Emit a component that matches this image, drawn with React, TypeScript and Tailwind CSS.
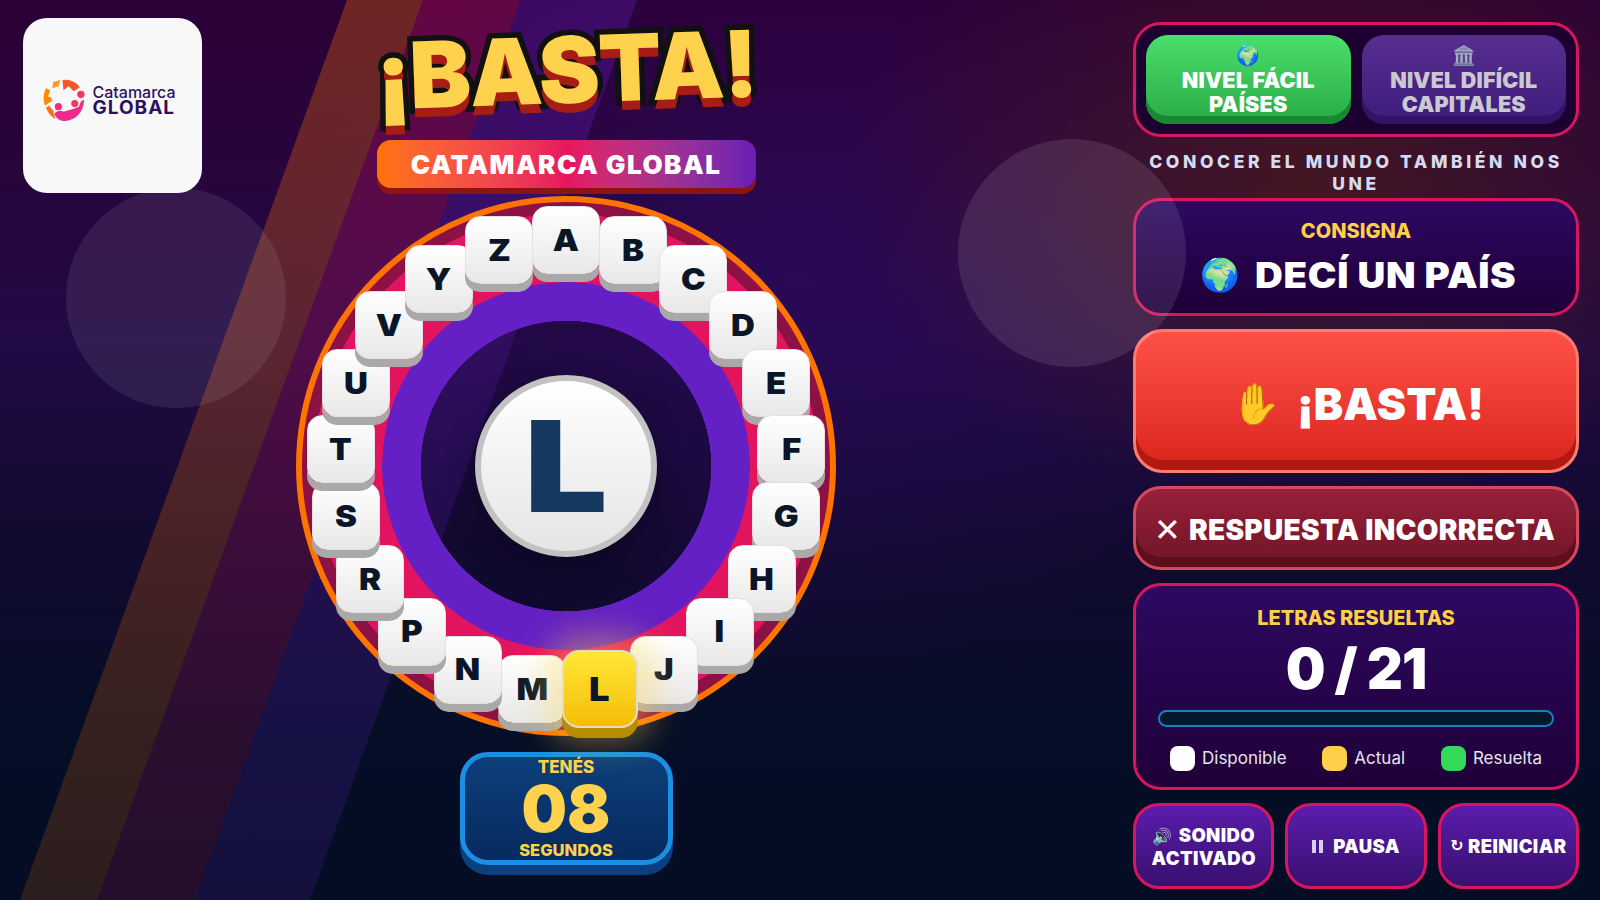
const LETTERS = ["A", "B", "C", "D", "E", "F", "G", "H", "I", "J", "L", "M", "N", "P", "R", "S", "T", "U", "V", "Y", "Z"];

function Logo() {
  return (
    <svg width="43" height="43" viewBox="0 0 42 42" className="shrink-0">
      <path d="M10 3 L17 1 L15 7 L9 9 Z" fill="#ff9a1a" />
      <path d="M3 9 C0 15 0 21 2 26 L8 22 C10 20 8 17 5 17 L7 11 Z" fill="#ff8a00" />
      <path d="M3 28 C5 33 8 37 12 39 L10 31 L6 26 Z" fill="#f97316" />
      <path d="M19 1 C26 0 32 3 36 8 L30 12 L25 7 L20 11 Z" fill="#f8552a" />
      <circle cx="37" cy="15" r="3.6" fill="#f5365c" />
      <circle cx="15" cy="27" r="3.5" fill="#f02a8a" />
      <circle cx="31" cy="24" r="3.5" fill="#f5365c" />
      <path d="M11 34 C14 31 17 30 20 32 L30 29 L35 27 L37 22 L40 20 C40 32 32 41 20 41 C17 41 13 39 11 34 Z" fill="#f02a8a" />
    </svg>
  );
}

function Tile({ letter, index }: { letter: string; index: number }) {
  const angle = (index * 2 * Math.PI) / LETTERS.length;
  const x = 270 + 226 * Math.sin(angle);
  const y = 270 - 226 * Math.cos(angle);
  const active = letter === "L";

  return (
    <div
      style={{ left: x, top: y }}
      className={
        active
          ? "absolute z-10 flex h-[78px] w-[76px] -translate-x-1/2 -translate-y-1/2 items-center justify-center rounded-[17px] border-2 border-[#e2ddc8] bg-linear-to-b from-[#ffe733] to-[#f5bd00] text-[33px] font-black text-[#0a1628] shadow-[0_10px_0_#b98d00,0_0_34px_14px_rgba(255,214,70,0.42)]"
          : "absolute flex h-[68px] w-[68px] -translate-x-1/2 -translate-y-1/2 items-center justify-center rounded-[15px] border border-[#e4dfe0] bg-linear-to-b from-white to-[#e8e8e8] text-[30px] font-black text-[#0a1628] shadow-[0_8px_0_#a9a9a9]"
      }
    >
      <span className="scale-x-[1.1]">{letter}</span>
    </div>
  );
}

function Wheel() {
  return (
    <div className="relative mt-[8px] h-[540px] w-[540px] rounded-full border-[6px] border-[#ff7300] bg-[radial-gradient(circle,rgba(16,0,40,0.15)_145px,#6420c4_145.5px,#6420c4_183.5px,#e3145f_184px,#e3145f_252px,#8d1145_252.5px)]">
      <div className="absolute -inset-[6px]">
        <div className="absolute left-1/2 top-1/2 flex h-[182px] w-[182px] -translate-x-1/2 -translate-y-1/2 items-center justify-center rounded-full border-[6px] border-[#c2c2c2] bg-linear-to-b from-white to-[#e5e5e5] text-[127px] font-black leading-none text-[#14385f] shadow-[0_10px_30px_rgba(0,0,0,0.35)]">
          <span className="scale-x-[1.16]">L</span>
        </div>
        {LETTERS.map((letter, index) => (
          <Tile key={letter} letter={letter} index={index} />
        ))}
      </div>
    </div>
  );
}

function LevelButton({ icon, lines, active }: { icon: string; lines: string[]; active?: boolean }) {
  return (
    <button
      className={
        active
          ? "flex h-[89px] flex-1 flex-col items-center justify-start rounded-[22px] bg-linear-to-b from-[#4bdf6c] to-[#28aa45] pb-[8px] pt-[9px] text-[21.5px] font-black leading-[24px] text-white shadow-[inset_0_-8px_0_#178a30]"
          : "flex h-[89px] flex-1 flex-col items-center justify-start rounded-[22px] bg-linear-to-b from-[#592e90] to-[#3c1c7c] pb-[8px] pt-[9px] text-[21.5px] font-black leading-[24px] text-[#c9c9cf] shadow-[inset_0_-8px_0_#301468]"
      }
    >
      <span className={active ? "h-[24px] text-[19px] leading-[24px]" : "h-[24px] text-[19px] leading-[24px] opacity-70"}>{icon}</span>
      {lines.map((line) => (
        <span key={line} className="tracking-[0.2px]">{line}</span>
      ))}
    </button>
  );
}

function LegendItem({ color, label }: { color: string; label: string }) {
  return (
    <div className="flex items-center gap-[7px]">
      <span className={`h-[25px] w-[25px] rounded-[8px] ${color}`} />
      <span className="text-[17px] text-[#e6e4ef]">{label}</span>
    </div>
  );
}

function SmallButton({ children }: { children: React.ReactNode }) {
  return (
    <button className="flex h-[86px] flex-1 items-center justify-center rounded-[26px] border-[3px] border-[#d8155f] bg-linear-to-b from-[#5a1cad] to-[#39106e] px-[2px] text-center text-[18.5px] font-black leading-[22px] tracking-[0.4px] text-white">
      {children}
    </button>
  );
}

export default function App() {
  return (
    <div
      className="relative flex h-[900px] w-[1600px] items-start overflow-hidden bg-[radial-gradient(ellipse_470px_320px_at_1310px_190px,rgba(103,43,0,0.45),transparent),radial-gradient(ellipse_500px_400px_at_800px_280px,rgba(50,10,110,0.45),transparent),linear-gradient(180deg,#2c0036_0%,#220a44_38%,#120a30_60%,#050e26_82%,#040d24_100%)] font-['Inter','Liberation_Sans',sans-serif]"
    >
      <svg className="pointer-events-none absolute inset-0" width="1600" height="900">
        <defs>
          <linearGradient id="a" x1="0" y1="0" x2="0" y2="1">
            <stop offset="0" stopColor="#ff7300" stopOpacity="0.32" />
            <stop offset="1" stopColor="#ff7300" stopOpacity="0.16" />
          </linearGradient>
          <linearGradient id="b" x1="0" y1="0" x2="0" y2="1">
            <stop offset="0" stopColor="#e3145f" stopOpacity="0.3" />
            <stop offset="1" stopColor="#e3145f" stopOpacity="0.14" />
          </linearGradient>
          <linearGradient id="c" x1="0" y1="0" x2="0" y2="1">
            <stop offset="0" stopColor="#6420c4" stopOpacity="0.3" />
            <stop offset="1" stopColor="#6420c4" stopOpacity="0.16" />
          </linearGradient>
        </defs>
        <polygon points="347,0 423,0 97,900 20,900" fill="url(#a)" />
        <polygon points="423,0 520,0 195,900 97,900" fill="url(#b)" />
        <polygon points="520,0 637,0 310,900 195,900" fill="url(#c)" />
      </svg>

      {/* logo */}
      <div className="relative ml-[23px] mt-[18px] flex h-[175px] w-[179px] shrink-0 items-center justify-center gap-[6px] rounded-[24px] bg-[#f8f8f9] pb-[11px] pr-[6px]">
        <Logo />
        <div className="flex flex-col pt-[2px] text-[#2d1160]">
          <span className="text-[16px] font-medium leading-[14px]">Catamarca</span>
          <span className="text-[19px] font-bold leading-[18px] tracking-[1px]">GLOBAL</span>
        </div>
      </div>

      {/* juego */}
      <div className="relative ml-[94px] flex w-[540px] shrink-0 flex-col items-center">
        <h1 className="h-[140px] -rotate-2 text-[92px] font-black leading-[140px] tracking-[-1.5px] text-[#ffd24d] [-webkit-text-stroke:11px_#111] [paint-order:stroke_fill] [text-shadow:0_9px_0_#a81c16]">
          ¡BASTA!
        </h1>
        <div className="flex h-[48px] w-[379px] items-center justify-center rounded-[14px] bg-linear-to-r from-[#ff7300] via-[#e8145f] to-[#6a1bb5] text-[26px] font-black tracking-[1.5px] text-white shadow-[0_6px_0_#8e1414]">
          CATAMARCA GLOBAL
        </div>
        <Wheel />
        <div className="mt-[16px] flex h-[113px] w-[213px] flex-col items-center rounded-[28px] border-[5px] border-[#1a8fe3] bg-linear-to-b from-[#0d3f7a] to-[#072a60] text-[#ffd24d] shadow-[0_10px_0_#0a4080]">
          <span className="h-[22px] text-[17px] font-extrabold leading-[20px]">TENÉS</span>
          <span className="h-[62px] text-[64px] font-black leading-[60px]">08</span>
          <span className="text-[16.5px] font-extrabold leading-[20px]">SEGUNDOS</span>
        </div>
      </div>

      {/* panel derecho */}
      <div className="relative ml-auto mr-[21px] mt-[22px] flex w-[446px] shrink-0 flex-col">
        <div className="flex h-[115px] gap-[11px] rounded-[28px] border-[3px] border-[#d8155f] bg-[#1b0030] px-[10px] pt-[10px]">
          <LevelButton active icon="🌍" lines={["NIVEL FÁCIL", "PAÍSES"]} />
          <LevelButton icon="🏛️" lines={["NIVEL DIFÍCIL", "CAPITALES"]} />
        </div>
        <p className="mt-[14px] h-[47px] px-[10px] text-center text-[17.5px] font-extrabold leading-[22px] tracking-[3.6px] text-[#d6dcf0]">
          CONOCER EL MUNDO TAMBIÉN NOS UNE
        </p>
        <div className="flex h-[118px] flex-col items-center rounded-[28px] border-[3px] border-[#d8155f] bg-linear-to-b from-[#2c0a62] to-[#1e0038] pt-[17px]">
          <span className="text-[20px] font-extrabold leading-[26px] text-[#ffcf4a]">CONSIGNA</span>
          <div className="mt-[6px] flex items-center gap-[27px] pr-[8px] text-[35px] font-black leading-[50px] text-white">
            <span className="text-[32px]">🌍</span>
            <span className="scale-x-[1.1] whitespace-nowrap tracking-[0.6px]">DECÍ UN PAÍS</span>
          </div>
        </div>
        <button className="mt-[13px] flex h-[144px] items-center justify-center gap-[16px] rounded-[30px] border-[3px] border-[#ff7a70] bg-linear-to-b from-[#ff5048] to-[#d9221a] pl-[3px] pt-[5px] text-[44px] font-black text-white shadow-[inset_0_-10px_0_#b01a12]">
          <span className="text-[40px]">✋</span>
          <span>¡BASTA!</span>
        </button>
        <button className="mt-[13px] flex h-[84px] items-center justify-center gap-[8px] rounded-[28px] border-[3px] border-[#d6495c] bg-linear-to-b from-[#97203a] to-[#701526] pr-[3px] pt-[4px] text-[28px] font-black text-white shadow-[inset_0_-10px_0_#5e0f1c]">
          <span className="text-[32px] font-normal">✕</span>
          <span className="tracking-[0.3px]">RESPUESTA INCORRECTA</span>
        </button>
        <div className="mt-[13px] flex h-[207px] flex-col items-center rounded-[28px] border-[3px] border-[#d8155f] bg-linear-to-b from-[#2c0a62] to-[#200038] px-[22px] pt-[19px]">
          <span className="text-[20px] font-extrabold leading-[26px] text-[#ffcf4a]">LETRAS RESUELTAS</span>
          <span className="mt-[2px] text-[56px] font-black leading-[72px] tracking-[-1px] text-white">0 / 21</span>
          <div className="mt-[5px] h-[17px] w-[396px] rounded-full border-2 border-[#1a7ec0] bg-[#03172f]" />
          <div className="mt-[19px] flex w-full items-center justify-between px-[12px]">
            <LegendItem color="bg-white" label="Disponible" />
            <LegendItem color="bg-[#ffcf4a]" label="Actual" />
            <LegendItem color="bg-[#35d958]" label="Resuelta" />
          </div>
        </div>
        <div className="mt-[13px] flex gap-[11px]">
          <SmallButton>
            <span>
              <span className="mr-[6px] text-[16px]">🔊</span>SONIDO
              <br />
              ACTIVADO
            </span>
          </SmallButton>
          <SmallButton>
            <span className="mr-[10px] flex gap-[3px]">
              <span className="h-[13px] w-[4px] bg-[#d5d0f0]" />
              <span className="h-[13px] w-[4px] bg-[#d5d0f0]" />
            </span>
            PAUSA
          </SmallButton>
          <SmallButton>
            <span className="mr-[4px] font-['DejaVu_Sans',sans-serif] text-[16px] font-bold">↻</span>REINICIAR
          </SmallButton>
        </div>
      </div>

      {/* burbujas */}
      <div className="pointer-events-none absolute left-[66px] top-[188px] h-[220px] w-[220px] rounded-full bg-white/8" />
      <div className="pointer-events-none absolute left-[958px] top-[139px] h-[228px] w-[228px] rounded-full bg-white/10" />
    </div>
  );
}
